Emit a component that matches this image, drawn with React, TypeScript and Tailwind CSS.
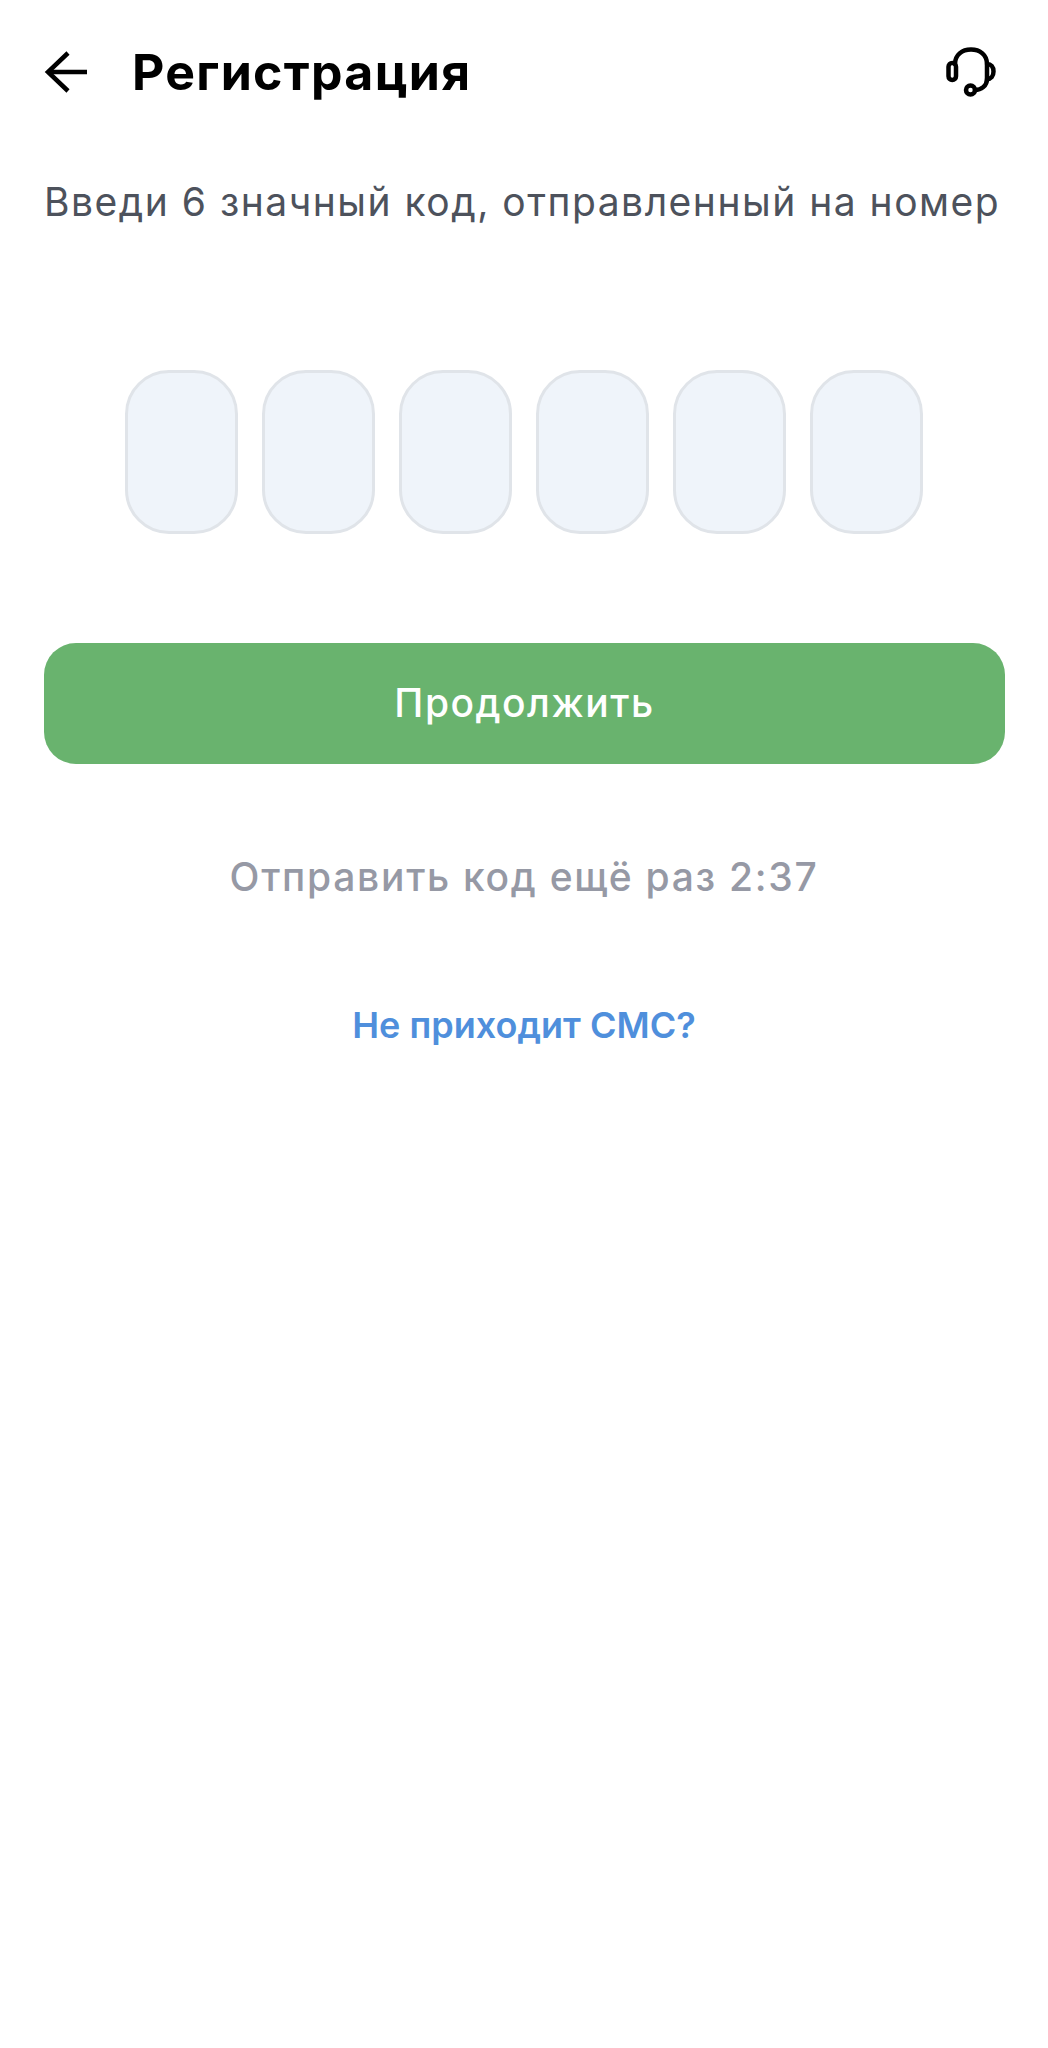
const cells = [0, 1, 2, 3, 4, 5];

function BackIcon() {
  return (
    <svg width="44" height="44" viewBox="0 0 44 44" fill="none" stroke="#000" strokeWidth="4.5">
      <path d="M43 22 H4" />
      <path d="M24 3 L4 22 L24 41" />
    </svg>
  );
}

function HeadsetIcon() {
  return (
    <svg width="50" height="50" viewBox="0 0 50 50" fill="none" stroke="#000" strokeWidth="4.5" strokeLinecap="round" strokeLinejoin="round">
      <path d="M9 17 C9 8 16 2.5 25 2.5 C34 2.5 41 8 41 17 V32 C41 39 35 43 29 43" />
      <rect x="2.5" y="16" width="7.5" height="17" rx="3.7" />
      <path d="M41 17 C45 17 47.5 20 47.5 24.5 C47.5 29 45 32 41 32" />
      <circle cx="24.5" cy="43" r="4.5" />
    </svg>
  );
}

export default function App() {
  return (
    <div className="w-[1048px] h-[2048px] bg-white font-['Inter','Noto_Sans',sans-serif]">
      <div className="flex items-center h-[72px] mt-[36px] pl-[44px] pr-[52px]">
        <BackIcon />
        <h1 className="ml-[44px] text-[50px] leading-none font-bold tracking-[1.3px] text-black">Регистрация</h1>
        <div className="ml-auto">
          <HeadsetIcon />
        </div>
      </div>

      <p className="mt-[69px] px-[44px] text-[39px] leading-[50px] tracking-[1.5px] text-[#4d525c] whitespace-nowrap">
        Введи 6 значный код, отправленный на номер
      </p>

      <div className="mt-[143px] pl-[125px] flex gap-[24px]">
        {cells.map((c) => (
          <div key={c} className="w-[113px] h-[164px] rounded-[44px] bg-[#eff4fa] border-[3px] border-[#e0e4e9]" />
        ))}
      </div>

      <button className="mt-[109px] ml-[44px] w-[961px] h-[121px] rounded-[32px] bg-[#69b36e] text-white text-[39px] tracking-[1.5px] font-medium flex items-center justify-center">
        Продолжить
      </button>

      <p className="mt-[83px] text-center text-[39px] leading-[60px] tracking-[1.7px] font-medium text-[#9699a5]">
        Отправить код ещё раз 2:37
      </p>

      <p className="mt-[93px] text-center text-[36px] leading-[50px] font-semibold text-[#4f8fdc]">
        Не приходит СМС?
      </p>
    </div>
  );
}
